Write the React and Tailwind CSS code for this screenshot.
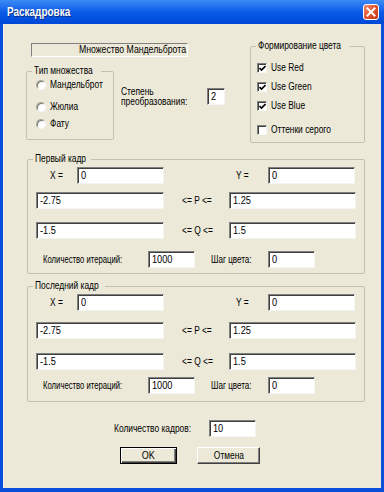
import React from 'react';

const FONT = "font-['Liberation_Sans',Arial,sans-serif]";

// the dialog text is a horizontally squeezed sans, so narrow each label
function T({ children, className = 'scale-x-[0.84] origin-left' }) {
  return <span className={`inline-block whitespace-nowrap ${className}`}>{children}</span>;
}

// sunken edit box, classic style
function Field({ value, className = '' }) {
  return (
    <div
      className={`h-[17px] shrink-0 bg-white border border-t-[#808080] border-l-[#808080] border-b-[#f4f4f0] border-r-[#f4f4f0] shadow-[inset_1px_1px_0_#404040] pl-[3px] text-[10px] leading-[15px] text-black ${className}`}
    >
      <T className="scale-x-[0.92] origin-left">{value}</T>
    </div>
  );
}

function Radio({ label, className = '' }) {
  return (
    <div className={`flex items-center h-[12px] ${className}`}>
      <span className="ml-[9px] w-[10px] h-[10px] shrink-0 rounded-full bg-white border border-t-[#a8a69a] border-l-[#a8a69a] border-b-[#f8f8f4] border-r-[#f8f8f4] shadow-[inset_1px_1px_0_#7a786e]" />
      <span className="ml-[4px] text-[10px] leading-[12px]">
        <T>{label}</T>
      </span>
    </div>
  );
}

function Check({ label, checked, className = '' }) {
  return (
    <div className={`flex items-center h-[12px] ${className}`}>
      <span className="ml-[6px] w-[10px] h-[10px] shrink-0 flex items-center justify-center bg-white border border-t-[#808080] border-l-[#808080] border-b-[#f8f8f4] border-r-[#f8f8f4] shadow-[inset_1px_1px_0_#404040]">
        {checked && (
          <svg width="7" height="7" viewBox="0 0 7 7">
            <path d="M0.5 3 L2.5 5 L6.5 1" stroke="#000" strokeWidth="1.6" fill="none" />
          </svg>
        )}
      </span>
      <span className="ml-[4px] text-[10px] leading-[12px]">
        <T>{label}</T>
      </span>
    </div>
  );
}

function Group({ title, legendW, className = '', children }) {
  return (
    <fieldset className={`border border-[#c3c0b0] rounded-[2px] shrink-0 ${className}`}>
      <legend className={`ml-[5px] px-[2px] text-[10px] leading-[12px] overflow-visible whitespace-nowrap ${legendW}`}>
        <T>{title}</T>
      </legend>
      {children}
    </fieldset>
  );
}

// first / last frame group, spacing differs a bit between the two
function FrameGroup({ title, legendW, className, gaps }) {
  return (
    <Group title={title} legendW={legendW} className={`ml-[23px] w-[338px] ${className}`}>
      <div className="flex items-center mt-[2px]">
        <span className="ml-[22px] w-[27px] text-[10px]"><T>X =</T></span>
        <Field value="0" className="w-[87px]" />
        <span className="ml-[72px] w-[32px] text-[10px]"><T>Y =</T></span>
        <Field value="0" className="w-[87px]" />
      </div>
      <div className={`flex items-center ${gaps[0]}`}>
        <Field value="-2.75" className="ml-[8px] w-[128px]" />
        <span className="ml-[18px] w-[47px] text-[10px]"><T>&lt;= P &lt;=</T></span>
        <Field value="1.25" className="w-[127px]" />
      </div>
      <div className={`flex items-center ${gaps[1]}`}>
        <Field value="-1.5" className="ml-[8px] w-[128px]" />
        <span className="ml-[18px] w-[47px] text-[10px]"><T>&lt;= Q &lt;=</T></span>
        <Field value="1.5" className="w-[127px]" />
      </div>
      <div className={`flex items-center ${gaps[2]}`}>
        <span className="ml-[15px] w-[105px] text-[10px]">
          <T className="scale-x-[0.77] origin-left">Количество итераций:</T>
        </span>
        <Field value="1000" className="w-[47px]" />
        <span className="ml-[16px] w-[57px] text-[10px]"><T className="scale-x-[0.81] origin-left">Шаг цвета:</T></span>
        <Field value="0" className="w-[47px]" />
      </div>
    </Group>
  );
}

export default function App() {
  return (
    <div className={`w-[384px] h-[492px] flex flex-col bg-[#0a4fdc] text-black ${FONT}`}>
      {/* title bar */}
      <div className="h-[24px] shrink-0 flex items-center bg-gradient-to-b from-[#3d8bf5] via-[#0a5ae8] to-[#0048d6]">
        <span className="ml-[7px] text-white font-bold text-[12px] leading-[14px] [text-shadow:1px_1px_0_#0a2a80]">
          <T className="scale-x-[0.83] origin-left">Раскадровка</T>
        </span>
        <div className="ml-auto mr-[5px] w-[16px] h-[16px] rounded-[3px] border border-white bg-gradient-to-br from-[#f08a6a] via-[#e0522e] to-[#c23a18] flex items-center justify-center">
          <svg width="10" height="10" viewBox="0 0 10 10">
            <path d="M1.5 1.5 L8.5 8.5 M8.5 1.5 L1.5 8.5" stroke="#fff" strokeWidth="2" strokeLinecap="square" />
          </svg>
        </div>
      </div>

      {/* client area */}
      <div className="flex-1 mx-[3px] mb-[4px] bg-[#ece9d8] flex flex-col border-l border-[#f4f2e8]">
        <div className="flex">
          <div className="ml-[22px] w-[224px] shrink-0">
            <div className="mt-[19px] ml-[5px] w-[157px] h-[14px] flex justify-end pr-[1px] border border-t-[#808080] border-l-[#808080] border-b-white border-r-white text-[10px] leading-[12px]">
              <T className="scale-x-[0.87] origin-right">Множество Мандельброта</T>
            </div>
            <div className="flex mt-[8px]">
              <Group title="Тип множества" legendW="w-[69px]" className="w-[87px] h-[75px]">
                <Radio label="Мандельброт" className="mt-[2px]" />
                <Radio label="Жюлиа" className="mt-[10px]" />
                <Radio label="Фату" className="mt-[5px]" />
              </Group>
              <div className="flex ml-[7px]">
                <div className="mt-[22px] w-[86px] text-[10px] leading-[10px]">
                  <T>Степень</T>
                  <br />
                  <T>преобразования:</T>
                </div>
                <Field value="2" className="mt-[23px] w-[18px] h-[15px] leading-[13px]" />
              </div>
            </div>
          </div>
          <Group title="Формирование цвета" legendW="w-[94px]" className="mt-[16px] w-[115px] h-[103px]">
            <Check label="Use Red" checked className="mt-[10px]" />
            <Check label="Use Green" checked className="mt-[7px]" />
            <Check label="Use Blue" checked className="mt-[7px]" />
            <Check label="Оттенки серого" className="mt-[12px]" />
          </Group>
        </div>

        <FrameGroup title="Первый кадр" legendW="w-[58px]" className="mt-[10px] h-[121px]" gaps={['mt-[8px]', 'mt-[13px]', 'mt-[12px]']} />
        <FrameGroup title="Последний кадр" legendW="w-[72px]" className="mt-[6px] h-[122px]" gaps={['mt-[11px]', 'mt-[14px]', 'mt-[7px]']} />

        <div className="flex items-center mt-[18px]">
          <span className="ml-[110px] w-[95px] text-[10px]"><T>Количество кадров:</T></span>
          <Field value="10" className="w-[47px]" />
        </div>
        <div className="flex mt-[10px] ml-[116px] gap-[20px]">
          <button className="w-[57px] h-[17px] border border-black bg-[#ece9d8] text-[10px] leading-[13px] shadow-[inset_1px_1px_0_#fff,inset_-1px_-1px_0_#404040,inset_-2px_-2px_0_#808080]">
            <T className="scale-x-[0.9] origin-center">OK</T>
          </button>
          <button className="w-[63px] h-[17px] bg-[#ece9d8] text-[10px] leading-[15px] border border-t-white border-l-white border-b-[#404040] border-r-[#404040] shadow-[inset_-1px_-1px_0_#808080]">
            <T className="scale-x-[0.84] origin-center">Отмена</T>
          </button>
        </div>
      </div>
    </div>
  );
}
